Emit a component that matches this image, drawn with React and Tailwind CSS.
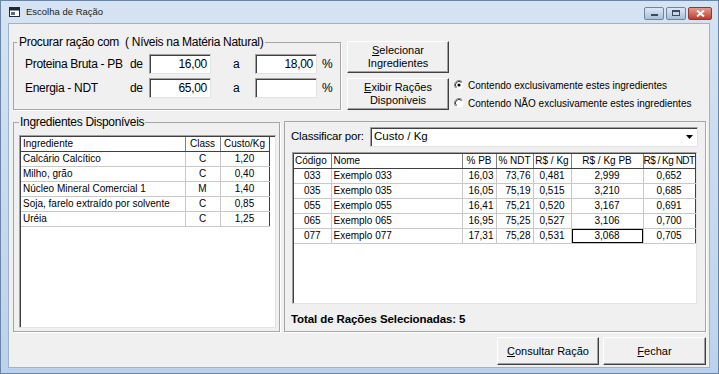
import React from 'react';

const ingredientes = [
  ['Calcário Calcítico', 'C', '1,20'],
  ['Milho, grão', 'C', '0,40'],
  ['Núcleo Mineral Comercial 1', 'M', '1,40'],
  ['Soja, farelo extraído por solvente', 'C', '0,85'],
  ['Uréia', 'C', '1,25'],
];

const racoes = [
  ['033', 'Exemplo 033', '16,03', '73,76', '0,481', '2,999', '0,652'],
  ['035', 'Exemplo 035', '16,05', '75,19', '0,515', '3,210', '0,685'],
  ['055', 'Exemplo 055', '16,41', '75,21', '0,520', '3,167', '0,691'],
  ['065', 'Exemplo 065', '16,95', '75,25', '0,527', '3,106', '0,700'],
  ['077', 'Exemplo 077', '17,31', '75,28', '0,531', '3,068', '0,705'],
];

const sunken = 'border border-t-[#a0a0a0] border-l-[#a0a0a0] border-r-[#e3e3e3] border-b-[#e3e3e3] shadow-[inset_1px_1px_0_#404040]';
const groupBox = 'border border-[#a6a6a6] shadow-[1px_1px_0_#fff]';

const WinButton = ({ children, className = '' }) => (
  <button className={`flex flex-col items-center justify-center bg-[#f0f0f0] border border-t-white border-l-white border-r-[#404040] border-b-[#404040] shadow-[inset_-1px_-1px_0_#a0a0a0] text-[11px] leading-[13px] text-black ${className}`}>
    {children}
  </button>
);

const Radio = ({ checked }) => (
  <svg width="10" height="10" viewBox="0 0 10 10" className="shrink-0">
    <circle cx="5" cy="5" r="4.5" fill="#fff" />
    <path d="M1.8 8.2 A4.5 4.5 0 0 1 8.2 1.8" stroke="#808080" strokeWidth="1" fill="none" />
    <path d="M2.5 7.5 A3.5 3.5 0 0 1 7.5 2.5" stroke="#404040" strokeWidth="1" fill="none" />
    {checked && <circle cx="5" cy="5" r="1.6" fill="#000" />}
  </svg>
);

const FieldInput = ({ value }) => (
  <div className={`w-[62px] h-[20px] bg-white ${sunken} flex items-center justify-end pr-[3px] text-[12px]`}>{value}</div>
);

export default function App() {
  return (
    <div className="w-[719px] h-[374px] flex flex-col bg-gradient-to-b from-[#d6e3f3] to-[#bcd2ec] border border-[#6b85a6] font-['Liberation_Sans',Arial,sans-serif] text-black overflow-hidden">
      {/* barra de título */}
      <div className="h-[22px] flex items-center pl-[8px] pr-[6px] shrink-0">
        <svg width="11" height="10" viewBox="0 0 11 10">
          <rect x="0.5" y="0.5" width="10" height="9" fill="#fff" stroke="#1e2a3a" />
          <rect x="0.5" y="0.5" width="10" height="3" fill="#1e2a3a" />
          <rect x="2" y="5" width="4" height="3" fill="#5a6b80" />
        </svg>
        <span className="ml-[6px] text-[9.5px] text-[#1b1b1b]">Escolha de Ração</span>
        <div className="ml-auto flex gap-[2px] mt-[2px]">
          <div className="w-[20px] h-[13px] rounded-[2px] border border-[#6d86a6] bg-gradient-to-b from-[#dfe8f3] to-[#a9bfd9] flex items-center justify-center">
            <div className="w-[7px] h-[2px] bg-white border border-[#3a4a60] mt-[4px]" />
          </div>
          <div className="w-[20px] h-[13px] rounded-[2px] border border-[#6d86a6] bg-gradient-to-b from-[#dfe8f3] to-[#a9bfd9] flex items-center justify-center">
            <div className="w-[8px] h-[6px] border border-[#3a4a60] border-t-2 bg-[#c8d6e6]" />
          </div>
          <div className="w-[24px] h-[13px] rounded-[2px] border border-[#8a3a34] bg-gradient-to-b from-[#e29a8f] to-[#c0392b] flex items-center justify-center">
            <svg width="9" height="7" viewBox="0 0 9 7">
              <path d="M1 0.5 L8 6.5 M8 0.5 L1 6.5" stroke="#fff" strokeWidth="2" />
            </svg>
          </div>
        </div>
      </div>

      {/* área cliente */}
      <div className="ml-[7px] mr-[8px] mb-[5px] flex-1 bg-[#f0f0f0] border border-[#9cb3d0] flex flex-col">
        {/* seção superior */}
        <div className="h-[91px] flex items-start pl-[4px] shrink-0">
          <fieldset className={`mt-[11px] w-[328px] h-[75px] ${groupBox}`}>
            <legend className="ml-[3px] px-[2px] text-[12px] leading-[14px] tracking-[-0.3px]">Procurar ração com&nbsp;&nbsp;( Níveis na Matéria Natural)</legend>
            <div className="mt-[5px] pl-[11px] flex flex-col gap-[4px] text-[12px] tracking-[-0.3px]">
              <div className="flex items-center h-[20px]">
                <span className="w-[105px]">Proteina Bruta - PB</span>
                <span className="w-[19px]">de</span>
                <FieldInput value="16,00" />
                <span className="w-[44px] pl-[22px]">a</span>
                <FieldInput value="18,00" />
                <span className="ml-[5px]">%</span>
              </div>
              <div className="flex items-center h-[20px]">
                <span className="w-[105px]">Energia - NDT</span>
                <span className="w-[19px]">de</span>
                <FieldInput value="65,00" />
                <span className="w-[44px] pl-[22px]">a</span>
                <FieldInput value="" />
                <span className="ml-[5px]">%</span>
              </div>
            </div>
          </fieldset>

          <div className="ml-[6px] mt-[17px] flex flex-col gap-[5px]">
            <WinButton className="w-[102px] h-[32px]">
              <span><span className="underline">S</span>elecionar</span>
              <span>Ingredientes</span>
            </WinButton>
            <WinButton className="w-[102px] h-[32px]">
              <span><span className="underline">E</span>xibir Rações</span>
              <span>Disponiveis</span>
            </WinButton>
          </div>

          <div className="ml-[5px] mt-[53px] flex flex-col gap-[2px] text-[10px]">
            <div className="flex items-center h-[16px] gap-[4px]">
              <Radio checked />
              <span>Contendo exclusivamente estes ingredientes</span>
            </div>
            <div className="flex items-center h-[16px] gap-[4px]">
              <Radio />
              <span>Contendo NÃO exclusivamente estes ingredientes</span>
            </div>
          </div>
        </div>

        {/* seção central */}
        <div className="h-[217px] flex items-start pl-[4px] gap-[4px] shrink-0">
          <fieldset className={`w-[267px] h-[217px] ${groupBox}`}>
            <legend className="ml-[5px] px-[1px] text-[12px] leading-[14px] tracking-[-0.3px]">Ingredientes Disponíveis</legend>
            <div className={`mt-[6px] ml-[5px] w-[257px] h-[193px] bg-white ${sunken} pl-[1px] pt-[1px]`}>
              <table className="table-fixed border-collapse text-[10px] border-r border-b border-[#404040]">
                <colgroup>
                  <col className="w-[164px]" />
                  <col className="w-[35px]" />
                  <col className="w-[49px]" />
                </colgroup>
                <thead>
                  <tr className="h-[14px]">
                    <th className="p-0 pl-[2px] font-normal text-left border-r border-[#808080] border-b border-b-[#404040] leading-[13px]">Ingrediente</th>
                    <th className="p-0 font-normal text-center border-r border-[#808080] border-b border-b-[#404040] leading-[13px]">Class</th>
                    <th className="p-0 font-normal text-center border-b border-b-[#404040] leading-[13px]">Custo/Kg</th>
                  </tr>
                </thead>
                <tbody>
                  {ingredientes.map(([nome, cls, custo]) => (
                    <tr key={nome} className="h-[15px]">
                      <td className="p-0 pl-[2px] whitespace-nowrap overflow-hidden border-r border-b border-[#c8c8c8] leading-[14px]">{nome}</td>
                      <td className="p-0 text-center border-r border-b border-[#c8c8c8] leading-[14px]">{cls}</td>
                      <td className="p-0 text-center border-b border-[#c8c8c8] leading-[14px]">{custo}</td>
                    </tr>
                  ))}
                </tbody>
              </table>
            </div>
          </fieldset>

          <fieldset className={`mt-[6px] w-[422px] h-[211px] ${groupBox} pl-[6px] pt-[5px]`}>
            <div className="flex items-center h-[20px]">
              <span className="w-[79px] text-[11.5px] tracking-[-0.2px]">Classificar por:</span>
              <div className={`w-[328px] h-[20px] bg-white ${sunken} flex items-stretch`}>
                <span className="flex-1 pl-[3px] text-[11.5px] leading-[17px]">Custo / Kg</span>
                <div className="w-[16px] flex items-center justify-center">
                  <svg width="7" height="6" viewBox="0 0 7 6">
                    <path d="M0 1 L7 1 L3.5 5 Z" fill="#000" />
                  </svg>
                </div>
              </div>
            </div>
            <div className={`mt-[5px] ml-[1px] w-[405px] h-[152px] bg-white ${sunken} pl-[1px] pt-[1px]`}>
              <table className="table-fixed border-collapse text-[10px] border-r border-b border-[#404040]">
                <colgroup>
                  <col className="w-[37px]" />
                  <col className="w-[131px]" />
                  <col className="w-[34px]" />
                  <col className="w-[37px]" />
                  <col className="w-[38px]" />
                  <col className="w-[72px]" />
                  <col className="w-[48px]" />
                </colgroup>
                <thead>
                  <tr className="h-[14px]">
                    <th className="p-0 pl-[1px] font-normal text-left border-r border-[#808080] border-b border-b-[#404040] leading-[13px]">Código</th>
                    <th className="p-0 pl-[2px] font-normal text-left border-r border-[#808080] border-b border-b-[#404040] leading-[13px]">Nome</th>
                    <th className="p-0 font-normal text-center border-r border-[#808080] border-b border-b-[#404040] leading-[13px]">% PB</th>
                    <th className="p-0 font-normal text-center border-r border-[#808080] border-b border-b-[#404040] leading-[13px] whitespace-nowrap">% NDT</th>
                    <th className="p-0 font-normal text-center border-r border-[#808080] border-b border-b-[#404040] leading-[13px] whitespace-nowrap">R$ / Kg</th>
                    <th className="p-0 font-normal text-center border-r border-[#808080] border-b border-b-[#404040] leading-[13px] whitespace-nowrap">R$ / Kg PB</th>
                    <th className="p-0 font-normal text-center border-b border-b-[#404040] leading-[13px] whitespace-nowrap overflow-hidden tracking-[-0.5px]">R$ / Kg NDT</th>
                  </tr>
                </thead>
                <tbody>
                  {racoes.map(([cod, nome, pb, ndt, kg, kgpb, kgndt], i) => (
                    <tr key={cod} className="h-[15px]">
                      <td className="p-0 text-center border-r border-b border-[#c8c8c8] leading-[14px]">{cod}</td>
                      <td className="p-0 pl-[2px] border-r border-b border-[#c8c8c8] leading-[14px]">{nome}</td>
                      <td className="p-0 pr-[2px] text-right border-r border-b border-[#c8c8c8] leading-[14px]">{pb}</td>
                      <td className="p-0 pr-[2px] text-right border-r border-b border-[#c8c8c8] leading-[14px]">{ndt}</td>
                      <td className="p-0 text-center border-r border-b border-[#c8c8c8] leading-[14px]">{kg}</td>
                      <td className={`p-0 text-center border-r border-b border-[#c8c8c8] leading-[14px] ${i === 4 ? 'shadow-[inset_0_0_0_1px_#000]' : ''}`}>{kgpb}</td>
                      <td className="p-0 text-center border-b border-[#c8c8c8] leading-[14px]">{kgndt}</td>
                    </tr>
                  ))}
                </tbody>
              </table>
            </div>
            <div className="mt-[8px] h-[14px] text-[11.5px] font-bold leading-[14px] tracking-[-0.1px]">Total de Rações Selecionadas: 5</div>
          </fieldset>
        </div>

        {/* botões inferiores */}
        <div className="flex justify-end gap-[4px] pt-[5px] pr-[3px]">
          <WinButton className="w-[102px] h-[28px] text-[11.5px]">
            <span><span className="underline">C</span>onsultar Ração</span>
          </WinButton>
          <WinButton className="w-[103px] h-[28px] text-[11.5px]">
            <span><span className="underline">F</span>echar</span>
          </WinButton>
        </div>
      </div>
    </div>
  );
}
